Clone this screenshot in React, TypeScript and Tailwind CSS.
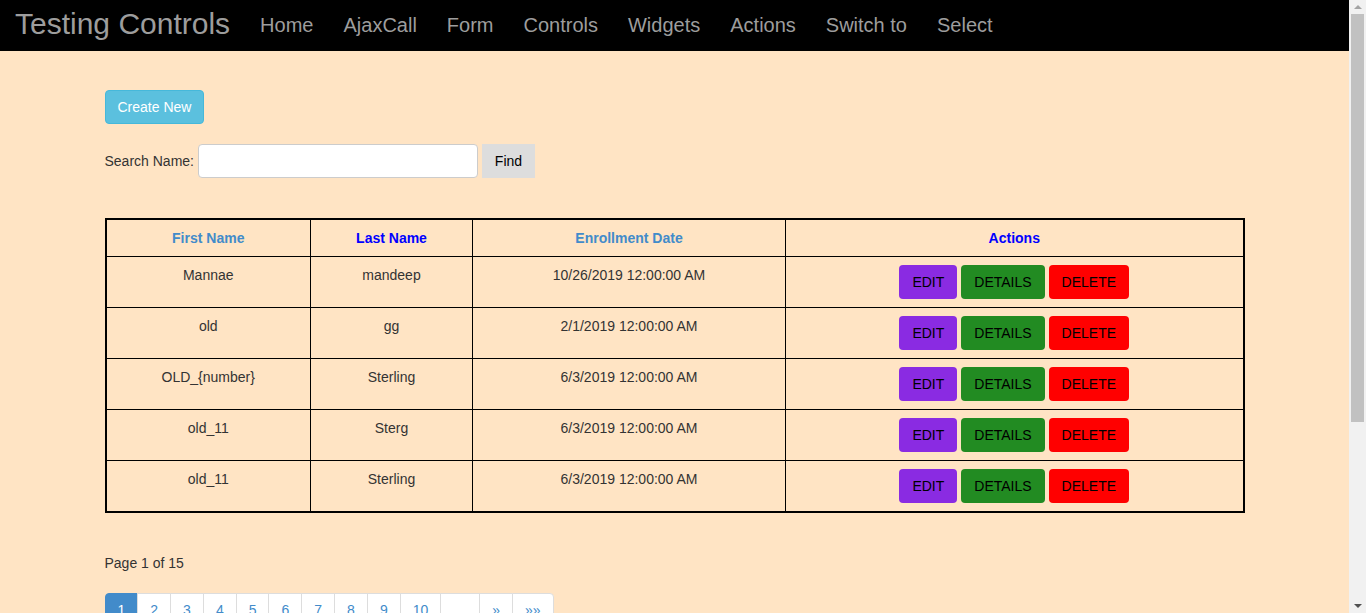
import React from "react";

const navLinks = ["Home", "AjaxCall", "Form", "Controls", "Widgets", "Actions", "Switch to", "Select"];

const rows = [
  { first: "Mannae", last: "mandeep", date: "10/26/2019 12:00:00 AM" },
  { first: "old", last: "gg", date: "2/1/2019 12:00:00 AM" },
  { first: "OLD_{number}", last: "Sterling", date: "6/3/2019 12:00:00 AM" },
  { first: "old_11", last: "Sterg", date: "6/3/2019 12:00:00 AM" },
  { first: "old_11", last: "Sterling", date: "6/3/2019 12:00:00 AM" },
];

const pages = ["1", "2", "3", "4", "5", "6", "7", "8", "9", "10", "", "»", "»»"];

const Scrollbar = () => (
  <div className="w-[17px] shrink-0 bg-[#f1f1f1] flex flex-col items-center">
    <div className="h-[14px] flex items-center justify-center">
      <div className="w-0 h-0 border-l-[4px] border-r-[4px] border-b-[4px] border-l-transparent border-r-transparent border-b-[#a3a3a3]" />
    </div>
    <div className="w-[13px] h-[408px] bg-[#c1c1c1]" />
    <div className="flex-1" />
    <div className="h-[14px] flex items-center justify-center">
      <div className="w-0 h-0 border-l-[4px] border-r-[4px] border-t-[4px] border-l-transparent border-r-transparent border-t-[#505050]" />
    </div>
  </div>
);

export default function App() {
  return (
    <div className="h-[613px] w-[1366px] overflow-hidden flex bg-[#ffe4c4] font-['Liberation_Sans',Arial,sans-serif] text-[14px] leading-[20px] text-[#333]">
      <div className="flex-1 overflow-hidden">
        {/* navbar */}
        <nav className="h-[51px] bg-black border-b border-black flex items-center">
          <span className="pl-[15px] pr-[15px] text-[30px] leading-[34px] text-[#9d9d9d] -mt-[2px]">
            Testing Controls
          </span>
          {navLinks.map((l) => (
            <a key={l} className="px-[15px] text-[20px] leading-[28px] text-[#9d9d9d]">
              {l}
            </a>
          ))}
        </nav>

        <div className="w-[1140px] mx-auto">
          <div className="pt-[39px]">
            <button className="h-[34px] px-[12px] bg-[#5bc0de] border border-[#46b8da] rounded-[4px] text-white">
              Create New
            </button>
          </div>

          <div className="mt-[20px] flex items-center h-[34px]">
            <span className="mr-[4px] -mt-[1px]">Search Name:</span>
            <input className="w-[280px] h-[34px] bg-white border border-[#ccc] rounded-[4px] px-[12px] outline-none" />
            <button className="ml-[4px] h-[34px] w-[53px] bg-[#dddddd] text-black">Find</button>
          </div>

          <table className="mt-[40px] w-full table-fixed border-collapse border-2 border-black">
            <colgroup>
              <col className="w-[205px]" />
              <col className="w-[162px]" />
              <col className="w-[313px]" />
              <col />
            </colgroup>
            <thead>
              <tr>
                <th className="border border-black p-[8px] font-bold text-[#428bca]">First Name</th>
                <th className="border border-black p-[8px] font-bold text-[#0000ff]">Last Name</th>
                <th className="border border-black p-[8px] font-bold text-[#428bca]">Enrollment Date</th>
                <th className="border border-black p-[8px] font-bold text-[#0000ff]">Actions</th>
              </tr>
            </thead>
            <tbody>
              {rows.map((r, i) => (
                <tr key={i}>
                  <td className="border border-black p-[8px] align-top text-center">{r.first}</td>
                  <td className="border border-black p-[8px] align-top text-center">{r.last}</td>
                  <td className="border border-black p-[8px] align-top text-center">{r.date}</td>
                  <td className="border border-black p-[8px] align-top">
                    <div className="flex justify-center gap-[4px]">
                      <button className="h-[34px] px-[12px] rounded-[4px] border border-transparent bg-[#8a2be2] text-black">EDIT</button>
                      <button className="h-[34px] px-[12px] rounded-[4px] border border-transparent bg-[#228b22] text-black">DETAILS</button>
                      <button className="h-[34px] px-[12px] rounded-[4px] border border-transparent bg-[#ff0000] text-black">DELETE</button>
                    </div>
                  </td>
                </tr>
              ))}
            </tbody>
          </table>

          <p className="mt-[40px]">Page 1 of 15</p>

          <ul className="mt-[20px] flex">
            {pages.map((p, i) => (
              <li
                key={i}
                className={
                  "h-[34px] px-[12px] py-[6px] border " +
                  (i === 0
                    ? "bg-[#428bca] border-[#428bca] text-white rounded-l-[4px]"
                    : "bg-white border-[#ddd] -ml-px text-[#428bca]") +
                  (i === pages.length - 1 ? " rounded-r-[4px]" : "") +
                  (p === "" ? " w-[40px]" : "")
                }
              >
                {p}
              </li>
            ))}
          </ul>
        </div>
      </div>
      <Scrollbar />
    </div>
  );
}
